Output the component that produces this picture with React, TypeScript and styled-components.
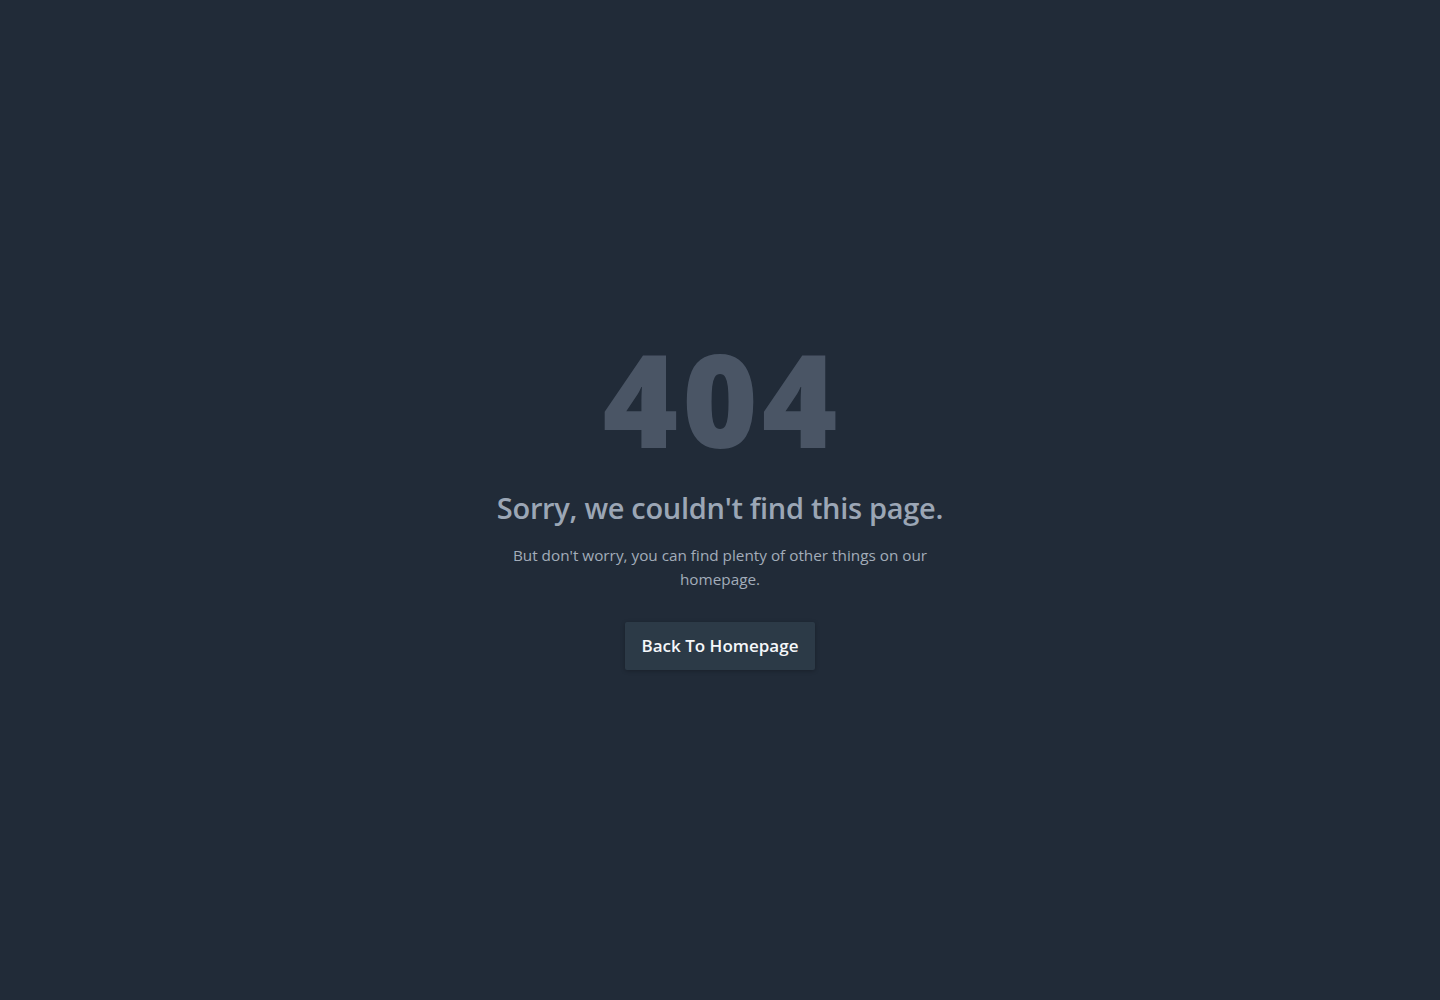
import React from "react";
import styled, { createGlobalStyle } from "styled-components";

const Global = createGlobalStyle`
  html, body { margin: 0; padding: 0; background: #212b38; }
  body { font-family: "Open Sans", "Noto Sans", sans-serif; }
  * { box-sizing: border-box; }
`;

const Section = styled.section`
  display: flex;
  align-items: center;
  justify-content: center;
  min-height: 1000px;
  padding: 64px;
  background: #212b38;
  color: #f3f4f6;
`;

const Container = styled.div`
  display: flex;
  flex-direction: column;
  align-items: center;
  justify-content: center;
  padding: 0 20px;
`;

const Inner = styled.div`
  max-width: 448px;
  text-align: center;
  display: flex;
  flex-direction: column;
  align-items: center;
`;

const Code = styled.h2`
  margin: 0 0 32px;
  font-size: 129px;
  line-height: 136px;
  height: 128px;
  font-weight: 800;
  color: #4a5565;
  letter-spacing: 4px;
  text-indent: 4px;
`;

const Title = styled.p`
  margin: 0;
  font-size: 29px;
  line-height: 36px;
  font-weight: 600;
  color: #9ba6b5;
  white-space: nowrap;
  letter-spacing: -0.3px;
`;

const Text = styled.p`
  margin: 17px 0 31px;
  font-size: 15.3px;
  line-height: 24px;
  color: #a3adba;
`;

const Button = styled.a`
  display: inline-block;
  padding: 12px 0;
  font-size: 17px;
  line-height: 24px;
  font-weight: 600;
  color: #f5f7fa;
  background: #2c3a47;
  border-radius: 2px;
  text-decoration: none;
  box-shadow: 0 1px 4px rgba(0, 0, 0, 0.25);
  width: 190px;
  text-align: center;
  white-space: nowrap;
`;

export default function App() {
  return (
    <>
      <Global />
      <Section>
        <Container>
          <Inner>
            <Code>404</Code>
            <Title>Sorry, we couldn't find this page.</Title>
            <Text>But don't worry, you can find plenty of other things on our homepage.</Text>
            <Button href="#">Back To Homepage</Button>
          </Inner>
        </Container>
      </Section>
    </>
  );
}
